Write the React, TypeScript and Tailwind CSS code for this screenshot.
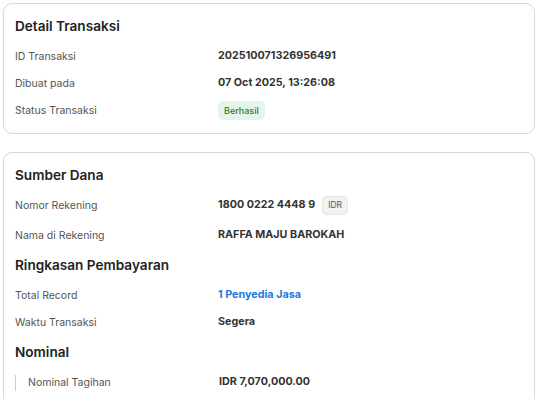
const Row = ({ label, children, className = '' }: { label: string; children: React.ReactNode; className?: string }) => (
  <div className={`flex items-center h-[27px] ${className}`}>
    <div className="w-[203px] text-[10.5px] text-[#555]">{label}</div>
    <div className="flex items-center text-[10.75px] font-bold text-[#333]">{children}</div>
  </div>
);

const Heading = ({ children, className = '' }: { children: React.ReactNode; className?: string }) => (
  <h2 className={`text-[13.6px] font-semibold text-[#222] h-[30px] flex items-center mb-[2px] ${className}`}>
    {children}
  </h2>
);

export default function App() {
  return (
    <div className="bg-white min-h-[399px] p-[3px] pr-[2px] font-['Inter',sans-serif]">
      <div className="border border-[#d9d9d9] rounded-[9px] px-[11px] pt-[7px] pb-[9px]">
        <Heading>Detail Transaksi</Heading>
        <Row label="ID Transaksi">202510071326956491</Row>
        <Row label="Dibuat pada">07 Oct 2025, 13:26:08</Row>
        <Row label="Status Transaksi">
          <span className="bg-[#e6f5ea] text-[#1e7b3a] text-[9px] font-medium rounded-[5px] px-[6px] py-[3px]">
            Berhasil
          </span>
        </Row>
      </div>

      <div className="mt-[18px] border border-[#d9d9d9] rounded-[9px] px-[11px] pt-[7px] pb-[10px]">
        <Heading>Sumber Dana</Heading>
        <Row label="Nomor Rekening">
          1800 0222 4448 9
          <span className="ml-[7px] bg-[#f2f2f2] border border-[#e6e6e6] text-[#555] text-[8.5px] font-normal rounded-[5px] px-[5px] py-[2px]">
            IDR
          </span>
        </Row>
        <Row label="Nama di Rekening" className="mt-[3px]">
          RAFFA MAJU BAROKAH
        </Row>
        <Heading className="mt-[1px]">Ringkasan Pembayaran</Heading>
        <Row label="Total Record">
          <span className="text-[#1a7be0]">1 Penyedia Jasa</span>
        </Row>
        <Row label="Waktu Transaksi">Segera</Row>
        <Heading className="mt-[1px]">Nominal</Heading>
        <div className="flex items-center h-[27px]">
          <div className="w-[204px] flex items-center">
            <div className="w-px h-[16px] bg-[#ccc] mr-[12px]" />
            <span className="text-[10.5px] text-[#555]">Nominal Tagihan</span>
          </div>
          <span className="text-[10.75px] font-bold text-[#333]">IDR 7,070,000.00</span>
        </div>
      </div>
    </div>
  );
}
